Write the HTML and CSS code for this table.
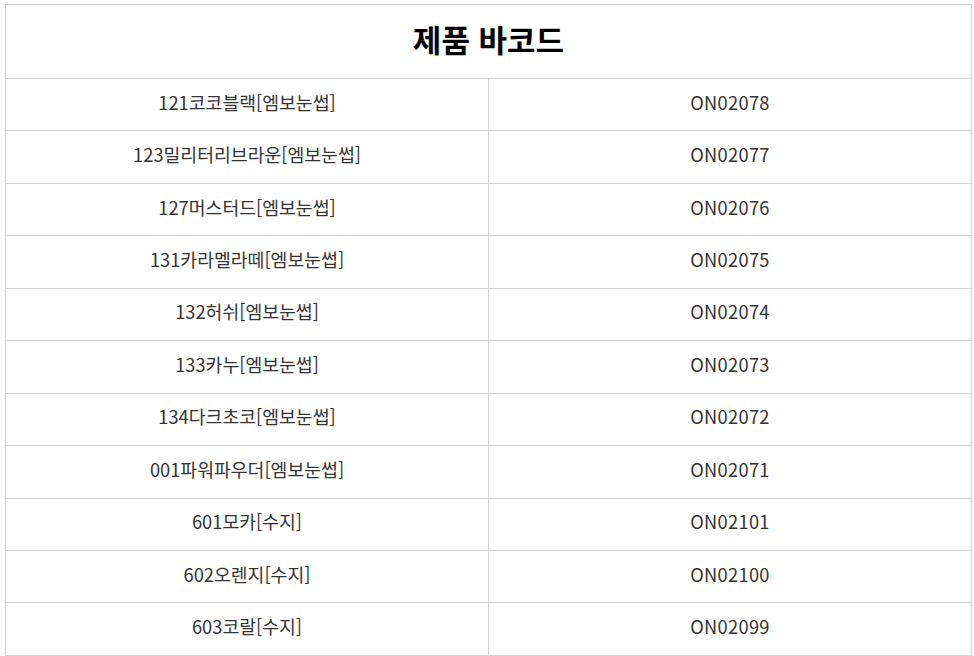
FILE: index.html
```html
<!DOCTYPE html>
<html lang="ko">
<head>
<meta charset="utf-8">
<link rel="stylesheet" href="styles.css">
</head>
<body>
<table class="barcode-table">
  <thead>
    <tr class="head-row"><th colspan="2">제품 바코드</th></tr>
  </thead>
  <tbody>
    <tr><td>121코코블랙[엠보눈썹]</td><td>ON02078</td></tr>
    <tr><td>123밀리터리브라운[엠보눈썹]</td><td>ON02077</td></tr>
    <tr><td>127머스터드[엠보눈썹]</td><td>ON02076</td></tr>
    <tr><td>131카라멜라떼[엠보눈썹]</td><td>ON02075</td></tr>
    <tr><td>132허쉬[엠보눈썹]</td><td>ON02074</td></tr>
    <tr><td>133카누[엠보눈썹]</td><td>ON02073</td></tr>
    <tr><td>134다크초코[엠보눈썹]</td><td>ON02072</td></tr>
    <tr><td>001파워파우더[엠보눈썹]</td><td>ON02071</td></tr>
    <tr><td>601모카[수지]</td><td>ON02101</td></tr>
    <tr><td>602오렌지[수지]</td><td>ON02100</td></tr>
    <tr><td>603코랄[수지]</td><td>ON02099</td></tr>
  </tbody>
</table>
</body>
</html>
```
FILE: styles.css
```css
html, body {
  margin: 0;
  padding: 0;
  background: #fff;
}
body {
  padding: 4px 0 0 5px;
  font-family: "Noto Sans CJK KR", "Noto Sans", sans-serif;
}
.barcode-table {
  width: 967px;
  border-collapse: collapse;
  table-layout: fixed;
}
.barcode-table th,
.barcode-table td {
  border: 1px solid #d3d3d3;
  text-align: center;
  padding: 0;
  line-height: 1.2;
}
.barcode-table th {
  height: 68px;
  padding-bottom: 5px;
  font-size: 31px;
  font-weight: 700;
  color: #000;
}
.barcode-table td {
  height: 47.45px;
  padding-bottom: 4px;
  font-size: 18.3px;
  color: #333;
  width: 50%;
}
.barcode-table td + td {
  letter-spacing: 0.3px;
}
```
